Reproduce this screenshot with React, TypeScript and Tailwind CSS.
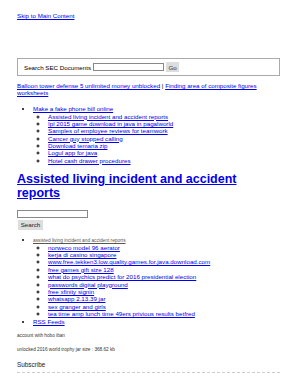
const topLinks = [
  'Assisted living incident and accident reports',
  'Ipl 2015 game download in java in pagalworld',
  'Samples of employee reviews for teamwork',
  'Cancer guy stopped calling',
  'Download temaria zip',
  'Logul app for java',
  'Hotel cash drawer procedures',
];

const related = [
  'norweco model 96 aerator',
  'kerja di casino singapore',
  'www.free.tekken3.low.quality.games.for.java.download.com',
  'free games gift size 128',
  'what do psychics predict for 2016 presidential election',
  'passwords digital playground',
  'free xfinity signin',
  'whatsapp 2.13.39 jar',
  'sex granger and girls',
  'tea time amp lunch time 49ers privious results betfred',
];

function App() {
  return (
    <div className="w-[298px] h-[386px] overflow-hidden bg-white pl-[17px] pr-[18px] pt-[12px] font-['Liberation_Sans',Arial,sans-serif] text-[6.2px] leading-[7.3px] text-black">
      <a href="#main" className="block w-fit text-[#0000ee] underline">
        Skip to Main Content
      </a>

      <form className="mt-[39px] h-[18px] border border-[#aaa] flex items-center pl-[6px]">
        <label className="mr-[2px]">Search SEC Documents</label>
        <input className="w-[71px] h-[8px] border border-[#888] bg-white" />
        <button type="button" className="ml-[2px] h-[10px] w-[13px] bg-[#ddd] text-[#333]">
          Go
        </button>
      </form>

      <div className="mt-[7px] leading-[6.6px]">
        <a href="#" className="text-[#0000ee] underline">
          Balloon tower defense 5 unlimited money unblocked
        </a>
        <span> | </span>
        <a href="#" className="text-[#0000ee] underline">
          Finding area of composite figures worksheets
        </a>
      </div>

      <ul className="mt-[9px] pl-[16px] list-disc">
        <li>
          <a href="#" className="text-[#0000ee] underline">Make a fake phone bill online</a>
          <ul className="pl-[15px] [list-style-type:circle]">
            {topLinks.map(t => (
              <li key={t}>
                <a href="#" className="text-[#0000ee] underline">{t}</a>
              </li>
            ))}
          </ul>
        </li>
      </ul>

      <h1 id="main" className="mt-[8px] text-[12.5px] leading-[14.6px] font-bold">
        <a href="#" className="text-[#0000ee] underline">Assisted living incident and accident reports</a>
      </h1>

      <div className="mt-[8.5px] flex flex-col items-start gap-[2px]">
        <input className="w-[71px] h-[8px] border border-[#888] bg-white" />
        <button type="button" className="ml-[1px] h-[10px] w-[25px] bg-[#ddd] text-[#222]">
          Search
        </button>
      </div>

      <ul className="mt-[7px] pl-[16px] list-disc">
        <li className="leading-[6px]">
          <a href="#" className="text-[4.8px] text-[#555] underline">assisted living incident and accident reports</a>
          <ul className="pl-[15px] [list-style-type:circle] text-[6.2px] leading-[7.4px]">
            {related.map(t => (
              <li key={t}>
                <a href="#" className="text-[#0000ee] underline">{t}</a>
              </li>
            ))}
          </ul>
        </li>
        <li>
          <a href="#" className="text-[#0000ee] underline">RSS Feeds</a>
        </li>
      </ul>

      <p className="mt-[8px] text-[4.7px] leading-[6px] text-[#333]">account with hobo iban</p>
      <p className="mt-[8.5px] text-[4.7px] leading-[6px] text-[#333]">
        unlocked 2016 world trophy jar size : 368.62 kb
      </p>

      <h2 className="mt-[8px] text-[6.4px] leading-[8px] text-[#222] pb-[2.5px] border-b border-dashed border-[#ccc]">
        Subscribe
      </h2>
    </div>
  );
}

export default App;
